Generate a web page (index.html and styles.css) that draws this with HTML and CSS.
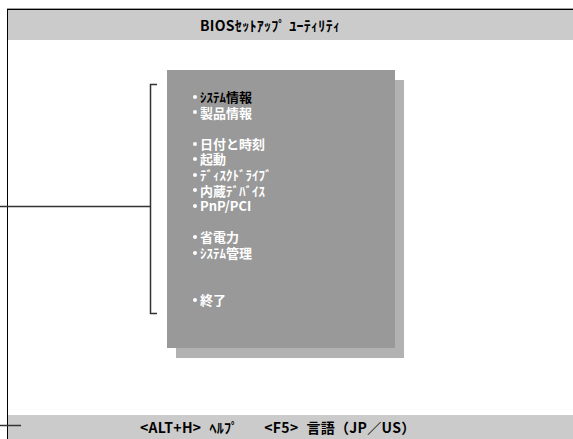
FILE: index.html
```html
<!DOCTYPE html>
<html lang="ja">
  <head>
    <meta charset="UTF-8" />
    <meta name="viewport" content="width=device-width, initial-scale=1.0" />
    <title>BIOSセットアップユーティリティ</title>
    <link rel="stylesheet" href="styles.css">
  </head>
  <body>
    <div class="screen">
      <div class="head">BIOSｾｯﾄｱｯﾌﾟ ﾕｰﾃｨﾘﾃｨ</div>
      <div class="main">
        <ul class="menu">
          <li class="on">ｼｽﾃﾑ情報</li>
          <li>製品情報</li>
          <li class="gap"></li>
          <li>日付と時刻</li>
          <li>起動</li>
          <li>ﾃﾞｨｽｸﾄﾞﾗｲﾌﾞ</li>
          <li>内蔵ﾃﾞﾊﾞｲｽ</li>
          <li>PnP/PCI</li>
          <li class="gap"></li>
          <li>省電力</li>
          <li>ｼｽﾃﾑ管理</li>
          <li class="gap"></li>
          <li class="gap"></li>
          <li>終了</li>
        </ul>
      </div>
      <div class="foot">
        <span class="key">&lt;ALT+H&gt;</span><span class="act">ﾍﾙﾌﾟ</span>
        <span class="key">&lt;F5&gt;</span><span class="act">言語（JP／US）</span>
      </div>
    </div>

    <svg class="marks" width="573" height="439" viewBox="0 0 573 439">
      <path d="M0 206.5 H150" />
      <path d="M157 84.5 H150.5 V313.5 H157" />
      <path d="M0 425.5 H21" />
    </svg>
  </body>
</html>
```

FILE: styles.css
```css
* {
  margin: 0;
  padding: 0;
  list-style: none;
}
html,
body {
  width: 573px;
  height: 439px;
  overflow: hidden;
  background: #fff;
}
body {
  position: relative;
  font-family: "Noto Sans CJK JP", "DejaVu Sans", sans-serif;
  font-weight: bold;
  font-size: 13px;
  color: #000;
}
.screen {
  display: flex;
  flex-direction: column;
  margin: 9px 0 0 7px;
  height: 430px;
  border-top: 1px solid #000;
  border-left: 1px solid #000;
  box-shadow: 0 -1px 0 #a0a0a0;
}
.head {
  height: 30px;
  line-height: 30px;
  padding-left: 192px;
  font-size: 14px;
  letter-spacing: 0.3px;
  background: #cbcbcb;
}
.main {
  flex: 1;
  padding: 30px 0 0 159px;
}
.menu {
  width: 228px;
  height: 278px;
  padding: 19px 0 0 0;
  box-sizing: border-box;
  background: #999;
  box-shadow: 9px 10px 0 #b2b2b2;
  color: #fff;
}
.menu li {
  display: flex;
  align-items: center;
  height: 15.6px;
  line-height: 15.6px;
  padding-left: 26px;
}
.menu li:not(.gap)::before {
  content: "";
  width: 4px;
  height: 4px;
  margin-right: 3px;
  border-radius: 50%;
  background: #fff;
}
.menu li.on {
  color: #000;
}
.foot {
  display: flex;
  height: 25px;
  line-height: 25px;
  padding-left: 132px;
  font-size: 14px;
  letter-spacing: 0.3px;
  background: #cbcbcb;
}
.foot .act {
  margin-left: 8px;
}
.foot .act:nth-of-type(2) {
  margin-right: 26px;
}
.marks {
  position: absolute;
  left: 0;
  top: 0;
  fill: none;
  stroke: #333;
  stroke-width: 1.5;
}
```
